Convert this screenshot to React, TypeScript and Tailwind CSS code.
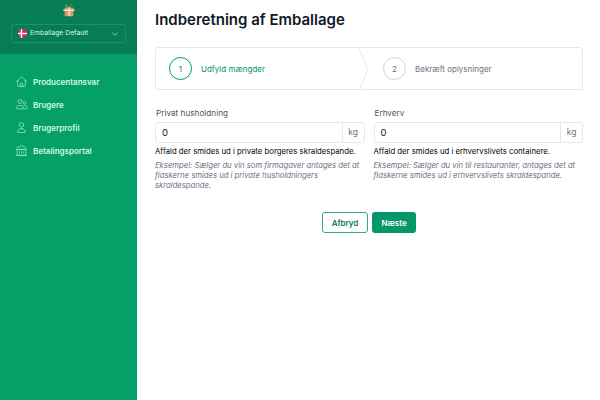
import { ChevronDown } from "lucide-react";
import { HiOutlineHome, HiOutlineLibrary, HiOutlineUser } from "react-icons/hi";

function UsersIcon({ className }: { className?: string }) {
  return (
    <svg viewBox="0 0 24 24" fill="none" stroke="currentColor" className={className}>
      <circle cx="9" cy="6.5" r="3.5" />
      <circle cx="17.5" cy="9" r="2.5" />
      <path d="M3 20v-2.5c0-2 1.8-3.5 4-3.5h4c2.2 0 4 1.5 4 3.5V20z" />
      <path d="M15.5 14h3c1.9 0 3.5 1.3 3.5 3v3h-7" />
    </svg>
  );
}

const navItems = [
  { label: "Producentansvar", icon: HiOutlineHome },
  { label: "Brugere", icon: UsersIcon },
  { label: "Brugerprofil", icon: HiOutlineUser },
  { label: "Betalingsportal", icon: HiOutlineLibrary },
];

function Logo() {
  return (
    <svg viewBox="0 0 16 16" className="h-[14px] w-[14px]">
      <path d="M8 6 L5.5 1.5 L3.5 3 Z" fill="#4fae6c" />
      <path d="M8 6 L9.5 0.5 L12 2.5 Z" fill="#2f8f50" />
      <rect x="3" y="5" width="10" height="10" rx="1" fill="#de9468" />
      <rect x="7" y="5" width="2.5" height="10" fill="#f0cfa8" />
      <rect x="1.5" y="7.5" width="13" height="1.5" fill="#f8ecd8" />
    </svg>
  );
}

function DanishFlag() {
  return (
    <svg viewBox="0 0 10 10" className="h-[9px] w-[9px] rounded-full">
      <rect width="10" height="10" fill="#e0274a" />
      <rect x="3" width="1.6" height="10" fill="#fff" />
      <rect y="4.2" width="10" height="1.6" fill="#fff" />
    </svg>
  );
}

function Field({ label, help, example }: { label: string; help: string; example: string }) {
  return (
    <div className="min-w-0 flex-1">
      <label className="block pl-[1px] text-[8.2px] leading-[12px] text-[#4b5563]">{label}</label>
      <div className="mt-[3px] flex h-[21px] rounded-[3px] border border-[#e5e7eb] bg-white">
        <div className="flex-1 pl-[6px] text-[9.5px] leading-[19px] text-[#111827]">0</div>
        <div className="w-[22px] border-l border-[#e5e7eb] text-center text-[8.5px] leading-[19px] text-[#6b7280]">kg</div>
      </div>
      <p className="mt-[2px] whitespace-nowrap text-[7.75px] leading-[12px] text-black">{help}</p>
      <p className="mt-[4px] text-[7.7px] italic leading-[10px] text-[#6b7280]">{example}</p>
    </div>
  );
}

export default function App() {
  return (
    <div className="flex h-[400px] w-[600px] bg-white font-['Inter',sans-serif]">
      <aside className="w-[137px] shrink-0 bg-[#059f68]">
        <div className="flex h-[54px] flex-col items-center bg-[#067d55] px-[11px]">
          <div className="mt-[3px] h-[17px]">
            <Logo />
          </div>
          <button
            type="button"
            className="mt-[4px] flex h-[19px] w-full items-center rounded-[3px] border border-[#1c9068] pl-[6px] pr-[5px] text-[6.8px] text-[#d7f5e6]"
          >
            <DanishFlag />
            <span className="ml-[3px] flex-1 text-left">Emballage Default</span>
            <ChevronDown className="h-[10px] w-[10px] text-[#a7e3c7]" />
          </button>
        </div>
        <nav className="mt-[18px] flex flex-col gap-[4px] pl-[15px]">
          {navItems.map((item) => (
            <div key={item.label} className="flex h-[19px] items-center gap-[5px] text-[8px] font-semibold text-[#d1fae5]">
              <item.icon className="h-[13px] w-[13px] stroke-[1.25] text-[#a7f3d0] [&_path]:[stroke-width:1.25]" />
              {item.label}
            </div>
          ))}
        </nav>
      </aside>
      <main className="min-w-0 flex-1 pl-[18px] pr-[17px]">
        <h1 className="mt-[10px] text-[15px] font-semibold leading-[20px] text-[#111827]">Indberetning af Emballage</h1>
        <div className="mt-[17px] flex h-[43px] overflow-hidden rounded-[3px] border border-[#e5e7eb]">
          <div className="relative flex w-[203px] items-center pl-[13px]">
            <div className="flex h-[23px] w-[23px] items-center justify-center rounded-full border border-[#059669] text-[8px] text-[#047857]">1</div>
            <span className="ml-[9px] text-[8px] text-[#059669]">Udfyld mængder</span>
            <svg viewBox="0 0 12 43" className="absolute right-[-12px] top-0 h-[43px] w-[12px]" fill="none">
              <path d="M0 0 L9 21.5 L0 43" stroke="#e5e7eb" />
            </svg>
          </div>
          <div className="flex items-center pl-[24px]">
            <div className="flex h-[23px] w-[23px] items-center justify-center rounded-full border border-[#d1d5db] text-[8px] text-[#6b7280]">2</div>
            <span className="ml-[9px] text-[8px] text-[#6b7280]">Bekræft oplysninger</span>
          </div>
        </div>
        <div className="mt-[17px] flex gap-[9px]">
          <Field
            label="Privat husholdning"
            help="Affald der smides ud i private borgeres skraldespande."
            example="Eksempel: Sælger du vin som firmagaver antages det at flaskerne smides ud i private husholdningers skraldespande."
          />
          <Field
            label="Erhverv"
            help="Affald der smides ud i erhvervslivets containere."
            example="Eksempel: Sælger du vin til restauranter, antages det at flaskerne smides ud i erhvervslivets skraldespande."
          />
        </div>
        <div className="mt-[21px] flex justify-center gap-[4px]">
          <button type="button" className="h-[21px] w-[46px] rounded-[3px] border border-[#34a883] bg-white text-[8px] font-semibold text-[#047857]">Afbryd</button>
          <button type="button" className="h-[21px] w-[44px] rounded-[3px] bg-[#059669] text-[8px] font-semibold text-white">Næste</button>
        </div>
      </main>
    </div>
  );
}
